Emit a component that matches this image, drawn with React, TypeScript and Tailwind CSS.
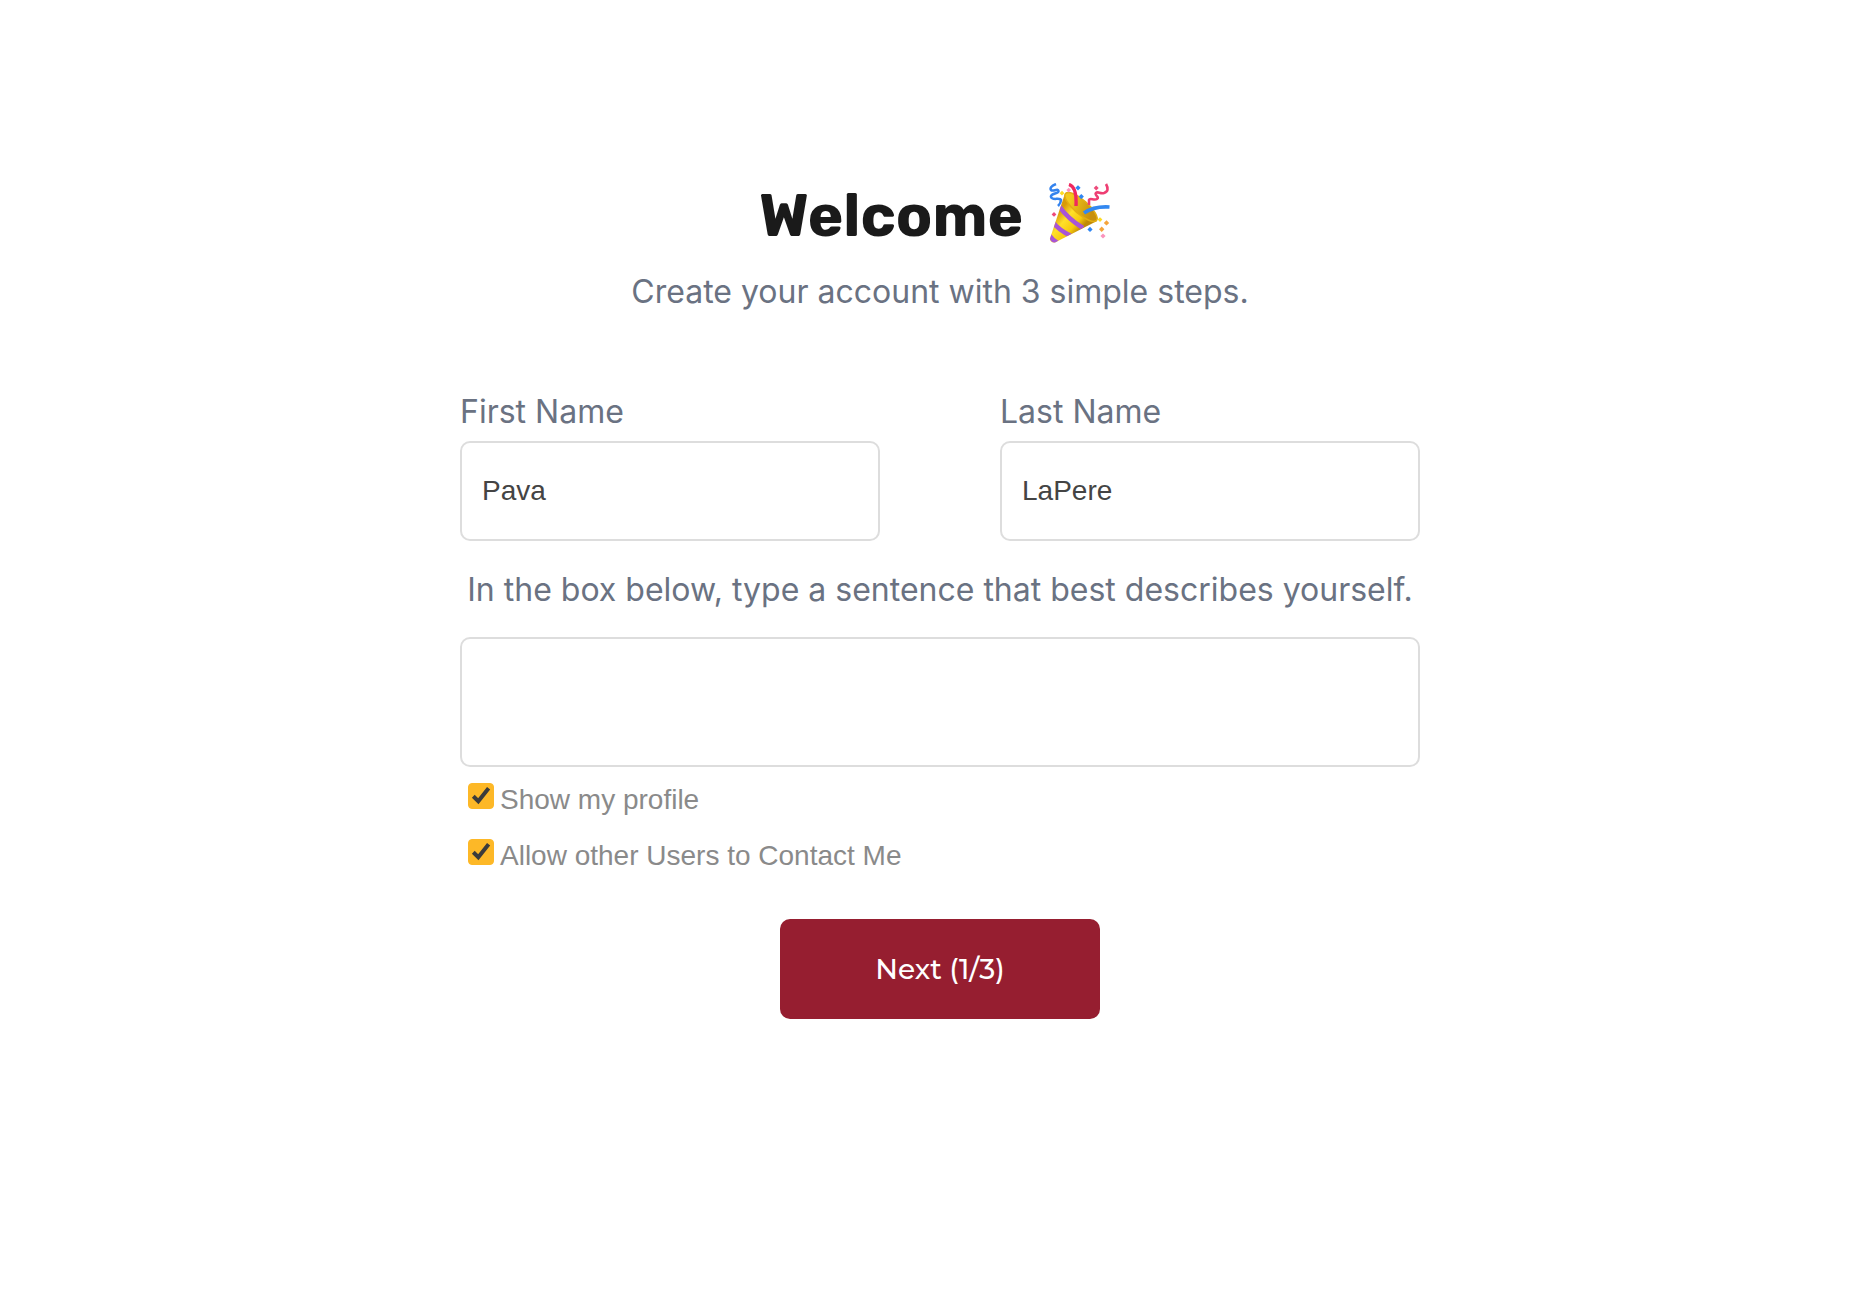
import { useState } from "react";
import type { FormEvent } from "react";

const labelClass = "font-['Inter',sans-serif] text-[32px] leading-[42px] text-gray-500";
const fieldClass =
  "w-full rounded-[10px] border-2 border-[#dddddd] bg-white px-5 font-['Liberation_Sans',Arial,sans-serif] text-[28px] text-[#444444] outline-none focus:border-[#961e30]";

function PartyPopper() {
  return (
    <svg width="62" height="62" viewBox="0 0 62 62" fill="none" role="img" aria-label="Party popper" className="mt-1">
      <defs>
        <linearGradient id="cone" x1="9" y1="30" x2="30" y2="48" gradientUnits="userSpaceOnUse">
          <stop offset="0" stopColor="#d89a08" />
          <stop offset="0.35" stopColor="#ffe02a" />
          <stop offset="0.75" stopColor="#f7c90c" />
          <stop offset="1" stopColor="#c08a06" />
        </linearGradient>
        <linearGradient id="mouth" x1="20" y1="28" x2="42" y2="18" gradientUnits="userSpaceOnUse">
          <stop offset="0" stopColor="#f3c91c" />
          <stop offset="1" stopColor="#c8900c" />
        </linearGradient>
        <clipPath id="coneClip">
          <path d="M15.5 13 1 55.5Q1 60 6 59.5L47 38Z" />
        </clipPath>
      </defs>

      <path d="M15.5 12 1 55.5Q1 60 6 59.5L48 38Z" fill="url(#cone)" />
      <g clipPath="url(#coneClip)" stroke="#a855d6" strokeWidth="4.6">
        <path d="M10 23Q19 36 34 45" />
        <path d="M3 38Q9 47 24 54" />
        <path d="M-1 51Q3 57 10 61" />
      </g>
      <ellipse cx="32" cy="24" rx="20.5" ry="7" transform="rotate(41 32 24)" fill="url(#mouth)" stroke="#e3ae12" strokeWidth="1.5" />

      <path d="M20 1.5Q28 4 27 23" stroke="#f0285f" strokeWidth="3.4" />
      <path d="M35 30Q45 23 60.5 24" stroke="#3388f0" strokeWidth="3.6" />
      <path d="M7 1Q0 4 2 7C4 9 9 5 9.5 8S1 10 2 14s9 0 10 3q0 3-3 6" stroke="#3483ee" strokeWidth="2.5" />
      <path d="M57 1Q61 8 55 10c-4 1-6-2-8 0s4 4 1 6-7-2-8 1v5" stroke="#ee3e73" strokeWidth="2.6" />

      <g fill="#2f86f4">
        <path d="m29 2.2 2.6 2.6L29 7.4l-2.6-2.6Z" />
        <path d="m32.3 11 2.6 2.6-2.6 2.6-2.6-2.6Z" />
        <path d="m41 43.8 2.6 2.6L41 49l-2.6-2.6Z" />
      </g>
      <g fill="#ed4b7b">
        <path d="m47.2 2.4 2.5 2.5-2.5 2.5-2.5-2.5Z" />
        <path d="m5 29 2.4 2.4L5 33.8l-2.4-2.4Z" />
      </g>
      <g fill="#fb94bd">
        <path d="m19.7 4.8 2.3 2.3-2.3 2.3-2.3-2.3Z" />
        <path d="m54 50.4 2.6 2.6-2.6 2.6-2.6-2.6Z" />
      </g>
      <g fill="#fddb24">
        <path d="m13 7.8 2.4 2.4-2.4 2.4-2.4-2.4Z" />
        <path d="m51 34.2 2.4 2.4L51 39l-2.4-2.4Z" />
      </g>
      <g fill="#f5a43a">
        <path d="m57.5 37.2 2.7 2.7-2.7 2.7-2.7-2.7Z" />
        <path d="m52.7 43.6 2.7 2.7-2.7 2.7-2.7-2.7Z" />
      </g>
    </svg>
  );
}

function TextField({ id, label, initial }: { id: string; label: string; initial: string }) {
  const [value, setValue] = useState(initial);

  return (
    <div className="flex min-w-0 flex-1 flex-col gap-2">
      <label htmlFor={id} className={labelClass}>
        {label}
      </label>
      <input
        id={id}
        type="text"
        value={value}
        onChange={(e) => setValue(e.target.value)}
        className={`${fieldClass} h-25`}
      />
    </div>
  );
}

function Checkbox({ id, label }: { id: string; label: string }) {
  const [checked, setChecked] = useState(true);

  return (
    <div className="flex h-14 items-start gap-1.5 pt-3 pl-2">
      <span className="relative flex shrink-0">
        <input
          id={id}
          type="checkbox"
          checked={checked}
          onChange={(e) => setChecked(e.target.checked)}
          className="size-[26px] appearance-none rounded border border-[#b0b0b0] bg-white checked:border-[#fdb827] checked:bg-[#fdb827]"
        />
        {checked && (
          <svg viewBox="0 0 26 26" fill="none" className="pointer-events-none absolute inset-0 size-[26px]">
            <path d="M5.3 13.3 10.3 18.2 20.6 5.3" stroke="#3b3b3b" strokeWidth="4" />
          </svg>
        )}
      </span>
      <label htmlFor={id} className="font-['Liberation_Sans',Arial,sans-serif] text-[28px] leading-[34px] text-[#8a8a8a]">
        {label}
      </label>
    </div>
  );
}

export default function App() {
  const [bio, setBio] = useState("");

  const handleSubmit = (e: FormEvent) => {
    e.preventDefault();
  };

  return (
    <main className="min-h-screen bg-white pt-[179px] pl-6">
      <div className="mx-auto flex max-w-[960px] flex-col">
        <header className="flex flex-col items-center gap-[18px] text-center">
          <h1 className="flex items-start gap-[26px] pr-2.5 font-['Rubik','Inter',sans-serif] text-[60px] leading-[74px] font-bold text-[#1a1a1a]">
            Welcome
            <PartyPopper />
          </h1>
          <p className={labelClass}>Create your account with 3 simple steps.</p>
        </header>

        <form onSubmit={handleSubmit} className="mt-[78px] flex flex-col">
          <div className="flex gap-30">
            <TextField id="firstName" label="First Name" initial="Pava" />
            <TextField id="lastName" label="Last Name" initial="LaPere" />
          </div>

          <label htmlFor="bio" className={`${labelClass} mt-7 mb-[26px] text-center`}>
            In the box below, type a sentence that best describes yourself.
          </label>
          <textarea
            id="bio"
            value={bio}
            onChange={(e) => setBio(e.target.value)}
            className={`${fieldClass} h-[130px] resize-none py-4`}
          />

          <div className="mt-1 flex flex-col">
            <Checkbox id="showProfile" label="Show my profile" />
            <Checkbox id="allowContact" label="Allow other Users to Contact Me" />
          </div>

          <button
            type="submit"
            className="mt-9 h-25 w-80 self-center rounded-[10px] bg-[#961e30] font-['Montserrat','Inter',sans-serif] text-[28px] font-medium text-white hover:bg-[#7f1828]"
          >
            Next (1/3)
          </button>
        </form>
      </div>
    </main>
  );
}
